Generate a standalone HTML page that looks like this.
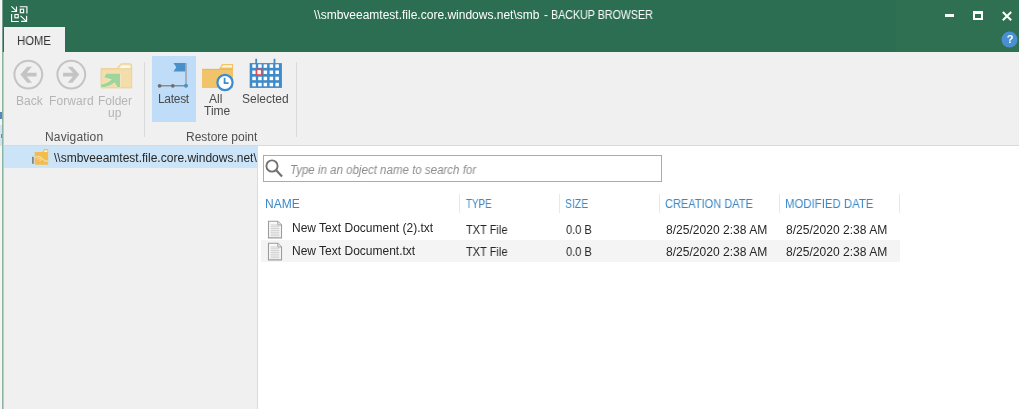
<!DOCTYPE html>
<html><head><meta charset="utf-8">
<style>
*{margin:0;padding:0;box-sizing:border-box}
html,body{width:1019px;height:409px;overflow:hidden;background:#fff}
body{position:relative;font-family:"Liberation Sans",sans-serif;font-size:12px;color:#262626}
.a{position:absolute}
.t{position:absolute;white-space:pre;line-height:14px;font-size:12px;will-change:transform}
</style></head><body>
<!-- left outside strip -->
<div class="a" style="left:0;top:0;width:2px;height:409px;background:#f5f5f5"></div>
<div class="a" style="left:2px;top:0;width:1px;height:409px;background:#8ab3a0"></div>
<div class="a" style="left:3px;top:0;width:1px;height:409px;background:#b5d0c3"></div>
<div class="a" style="left:0;top:112px;width:2px;height:7px;background:#5a84c0"></div>
<div class="a" style="left:0;top:125px;width:2px;height:21px;background:#d2e3f4"></div>
<div class="a" style="left:1px;top:134px;width:1px;height:4px;background:#9a8a4a"></div>
<!-- title bar -->
<div class="a" style="left:2px;top:0;width:1px;height:52px;background:#7aa08f"></div>
<div class="a" style="left:3px;top:0;width:1016px;height:52px;background:#2c6e51"></div>
<div class="a" style="left:896px;top:0;width:123px;height:52px;background:#2e7051"></div>
<svg class="a" style="left:11px;top:6px" width="17" height="17" viewBox="0 0 17 17" fill="none" stroke="#fff" stroke-width="1.15">
  <path d="M0.4 0.4L5.4 5.2M5.5 0.4V5.5H0.4"/>
  <path d="M8.7 0.7H15.9V7.4"/>
  <rect x="9.3" y="3.2" width="3.3" height="3.5"/>
  <path d="M0.6 8V15.5H7.8"/>
  <rect x="3.9" y="8.5" width="3.3" height="3.3"/>
  <path d="M9.5 9.8L15.3 15.2M15.6 9.8V15.4H10.1"/>
</svg>
<div class="t" style="left:314px;top:8px;color:#fff">\\smbveeamtest.file.core.windows.net\smb</div>
<div class="t" style="left:544px;top:8px;color:#fff">-</div>
<div class="t" style="left:551px;top:8px;color:#fff;transform:scaleX(0.89);transform-origin:0 0">BACKUP BROWSER</div>
<!-- window controls -->
<div class="a" style="left:945px;top:14px;width:9px;height:3px;background:#fff"></div>
<div class="a" style="left:973px;top:11px;width:10px;height:9px;border:2px solid #fff;border-top-width:3px"></div>
<svg class="a" style="left:1001px;top:10px" width="12" height="12" viewBox="0 0 12 12" stroke="#fff" stroke-width="2"><path d="M1.8 2L10.2 10.3M10.2 2L1.8 10.3"/></svg>
<svg class="a" style="left:1000px;top:30px" width="19" height="19" viewBox="0 0 19 19"><circle cx="9.5" cy="9.6" r="8" fill="#4a90d0"/></svg>
<div class="t" style="left:1002px;top:32px;width:16px;text-align:center;color:#fff;font-weight:bold;font-size:11px">?</div>
<!-- HOME tab -->
<div class="a" style="left:4px;top:27px;width:61px;height:25px;background:#f0f0f0"></div>
<div class="t" style="left:17px;top:34px;color:#333;transform:scaleX(0.94);transform-origin:0 0">HOME</div>
<!-- ribbon -->
<div class="a" style="left:4px;top:52px;width:1015px;height:93px;background:#f0f0f0"></div>
<div class="a" style="left:3px;top:145px;width:1016px;height:1px;background:#d9d9d9"></div>


<!-- Navigation group -->
<svg class="a" style="left:12px;top:58px" width="34" height="34" viewBox="0 0 34 34">
  <circle cx="16.3" cy="16.6" r="13.9" fill="none" stroke="#c4c4c4" stroke-width="2"/>
  <path d="M24.55 14.8H14.65L20.05 8.7H15.25L8.35 16.6L15.25 24.8H20.05L14.65 18.5H24.55Z" fill="#c4c4c4"/>
</svg>
<svg class="a" style="left:55px;top:58px" width="34" height="34" viewBox="0 0 34 34">
  <circle cx="16.3" cy="16.6" r="13.9" fill="none" stroke="#c4c4c4" stroke-width="2"/>
  <path d="M8.1 14.8H18L12.6 8.7H17.4L24.3 16.6L17.4 24.8H12.6L18 18.5H8.1Z" fill="#c4c4c4"/>
</svg>
<svg class="a" style="left:100px;top:62px" width="34" height="28" viewBox="0 0 34 28">
  <path d="M1 6.8H16.7L20.8 1.8H30.2Q31.7 1.8 31.7 3.3V25.9H1Z" fill="#f2ddab" stroke="#ebd29a" stroke-width="1"/>
  <path d="M19 6.2L21.6 3.2H30.4V6.2Z" fill="#f8f7f4"/>
  <path d="M1 6.8H31.5" stroke="#ebd29a" stroke-width="1"/>
  <path d="M6.4 11.5H20V25.2L17.8 25.6L14.6 20.4Q9 24.8 1 25.6V22.6Q7.5 21.6 11.6 17.6L4 15.3Z" fill="#9fd59c" stroke="#f7f0de" stroke-width="0.9" paint-order="stroke"/>
</svg>
<div class="t" style="left:16px;top:94px;color:#b4b4b4">Back</div>
<div class="t" style="left:49px;top:94px;color:#b4b4b4;letter-spacing:0.1px">Forward</div>
<div class="t" style="left:98px;top:94px;color:#b4b4b4">Folder</div>
<div class="t" style="left:108px;top:106px;color:#b4b4b4">up</div>
<div class="t" style="left:45px;top:130px;color:#505050;letter-spacing:0.15px">Navigation</div>
<div class="a" style="left:144px;top:62px;width:1px;height:75px;background:#dadada"></div>

<!-- Restore point group -->
<div class="a" style="left:152px;top:56px;width:44px;height:66px;background:#bfdcf8"></div>
<svg class="a" style="left:155px;top:60px" width="36" height="30" viewBox="0 0 36 30">
  <path d="M31 3V26" stroke="#8c8c8c" stroke-width="1.1"/>
  <path d="M18.5 3H30.2V11.5H18.5L21.3 7.2Z" fill="#4a90c8"/>
  <path d="M4.5 25.8H31" stroke="#7a7a7a" stroke-width="1.2"/>
  <circle cx="4.6" cy="25.8" r="1.9" fill="#6e6e6e"/>
  <circle cx="17.8" cy="25.8" r="1.9" fill="#6e6e6e"/>
  <circle cx="31" cy="25.8" r="2" fill="#4a90c8"/>
</svg>
<div class="t" style="left:158px;top:92px;color:#4a4a4a;letter-spacing:-0.3px">Latest</div>
<svg class="a" style="left:200px;top:62px" width="36" height="32" viewBox="0 0 36 32">
  <path d="M2 7H19L22 2H33V26H2Z" fill="#f1c36b"/>
  <path d="M21 5.5L23 3.2H32V5.5Z" fill="#fdf3df"/>
  <path d="M2 7.3H33" stroke="#e6b052" stroke-width="0.8"/>
  <circle cx="25" cy="20.5" r="7.6" fill="#fff" stroke="#3b8bd2" stroke-width="2.2"/>
  <path d="M24.6 15.8V21.2H28.6" fill="none" stroke="#3b8bd2" stroke-width="1.8"/>
</svg>
<div class="t" style="left:209px;top:92px;color:#4a4a4a">All</div>
<div class="t" style="left:204px;top:104px;color:#4a4a4a">Time</div>
<svg class="a" style="left:249px;top:58px" width="34" height="32" viewBox="0 0 34 32">
  <rect x="0.7" y="5.1" width="32.2" height="24.8" fill="#3f8ac8"/>
  <path d="M7.2 0.8V6M25.5 0.8V6" stroke="#3f8ac8" stroke-width="1.8"/>
  <g fill="#fff"><rect x="3.3" y="6.3" width="3.5" height="3.5"/><rect x="9.2" y="6.3" width="3.5" height="3.5"/><rect x="14.6" y="6.3" width="3.5" height="3.5"/><rect x="20.6" y="6.3" width="3.5" height="3.5"/><rect x="26.4" y="6.3" width="3.5" height="3.5"/><rect x="3.3" y="12.5" width="3.5" height="3.5"/><rect x="9.2" y="12.5" width="3.5" height="3.5"/><rect x="14.6" y="12.5" width="3.5" height="3.5"/><rect x="20.6" y="12.5" width="3.5" height="3.5"/><rect x="26.4" y="12.5" width="3.5" height="3.5"/><rect x="3.3" y="18.7" width="3.5" height="3.5"/><rect x="9.2" y="18.7" width="3.5" height="3.5"/><rect x="14.6" y="18.7" width="3.5" height="3.5"/><rect x="20.6" y="18.7" width="3.5" height="3.5"/><rect x="26.4" y="18.7" width="3.5" height="3.5"/><rect x="3.3" y="24.8" width="3.5" height="3.5"/><rect x="9.2" y="24.8" width="3.5" height="3.5"/><rect x="14.6" y="24.8" width="3.5" height="3.5"/><rect x="20.6" y="24.8" width="3.5" height="3.5"/><rect x="26.4" y="24.8" width="3.5" height="3.5"/></g>
  <rect x="7.5" y="11.4" width="5.2" height="5.6" fill="#fff" stroke="#e5484d" stroke-width="1.6"/>
</svg>
<div class="t" style="left:242px;top:92px;color:#4a4a4a">Selected</div>
<div class="t" style="left:186px;top:130px;color:#505050">Restore point</div>
<div class="a" style="left:296px;top:62px;width:1px;height:75px;background:#dadada"></div>

<!-- tree panel -->
<div class="a" style="left:4px;top:146px;width:253px;height:263px;background:#f0f0f0"></div>
<div class="a" style="left:257px;top:146px;width:1px;height:263px;background:#dcdcdc"></div>
<div class="a" style="left:4px;top:146px;width:253px;height:22px;background:#cce4f7"></div>
<div class="t" style="left:54px;top:151px;width:203px;overflow:hidden;color:#262626">\\smbveeamtest.file.core.windows.net\smb</div>


<svg class="a" style="left:30px;top:148px" width="20" height="18" viewBox="0 0 20 18">
  <path d="M4.7 3.9H12.5L14.1 1H17.2Q18.2 1 18.2 2V15.8Q18.2 16.8 17.2 16.8H6Q4.7 16.8 4.7 15.5Z" fill="#f3bd4e"/>
  <path d="M13.8 3.9L14.8 2.3H17.3V3.9Z" fill="#fff4d8"/>
  <path d="M5 9.8Q7 8.4 8.8 8.5Q11 8.8 12.5 11Q14.5 13.3 18.2 13.4" fill="none" stroke="#f8e0ae" stroke-width="1.1"/>
  <path d="M6.6 11.8Q8.6 9.4 10.8 11.2Q11.5 12.6 9.3 13.1" fill="none" stroke="#f8e0ae" stroke-width="1"/>
  <rect x="2" y="8.8" width="1.8" height="7" fill="#858585"/>
</svg>
<!-- content -->
<div class="a" style="left:263px;top:155px;width:399px;height:27px;border:1px solid #ababab;background:#fff"></div>
<svg class="a" style="left:264px;top:158px" width="22" height="22" viewBox="0 0 22 22">
  <circle cx="8" cy="8" r="5.6" fill="none" stroke="#727272" stroke-width="1.9"/>
  <path d="M12 12L18 18.5" stroke="#727272" stroke-width="2.2"/>
</svg>
<div class="t" style="left:290px;top:163px;color:#8c8c8c;font-style:italic;transform:scaleX(0.96);transform-origin:0 0">Type in an object name to search for</div>

<div class="t" style="left:265px;top:197px;color:#3a88c8">NAME</div>
<div class="t" style="left:466px;top:197px;color:#3a88c8;transform:scaleX(0.82);transform-origin:0 0">TYPE</div>
<div class="t" style="left:565px;top:197px;color:#3a88c8;transform:scaleX(0.87);transform-origin:0 0">SIZE</div>
<div class="t" style="left:665px;top:197px;color:#3a88c8;transform:scaleX(0.92);transform-origin:0 0">CREATION DATE</div>
<div class="t" style="left:785px;top:197px;color:#3a88c8;transform:scaleX(0.95);transform-origin:0 0">MODIFIED DATE</div>
<div class="a" style="left:459px;top:194px;width:1px;height:19px;background:#e8e8e8"></div>
<div class="a" style="left:559px;top:194px;width:1px;height:19px;background:#e8e8e8"></div>
<div class="a" style="left:659px;top:194px;width:1px;height:19px;background:#e8e8e8"></div>
<div class="a" style="left:779px;top:194px;width:1px;height:19px;background:#e8e8e8"></div>
<div class="a" style="left:899px;top:194px;width:1px;height:19px;background:#e8e8e8"></div>

<div class="a" style="left:261px;top:240px;width:639px;height:22px;background:#f4f4f4"></div>
<svg class="a" style="left:267px;top:220px" width="16" height="20" viewBox="0 0 16 20">
  <path d="M1.5 1.3H10.8L14.5 5V17.9H1.5Z" fill="#f8f8f8" stroke="#9c9c9c" stroke-width="1.1"/>
  <path d="M10.8 1.3V5H14.5" fill="#e8e8e8" stroke="#9c9c9c" stroke-width="0.9"/>
  <path d="M3.6 5.0H12.4M3.6 6.8H12.4M3.6 8.6H12.4M3.6 10.4H12.4M3.6 12.2H12.4M3.6 14.0H12.4M3.6 15.8H12.4" stroke="#c8c8c8" stroke-width="0.9"/>
</svg>
<svg class="a" style="left:267px;top:242px" width="16" height="20" viewBox="0 0 16 20">
  <path d="M1.5 1.3H10.8L14.5 5V17.9H1.5Z" fill="#f8f8f8" stroke="#9c9c9c" stroke-width="1.1"/>
  <path d="M10.8 1.3V5H14.5" fill="#e8e8e8" stroke="#9c9c9c" stroke-width="0.9"/>
  <path d="M3.6 5.0H12.4M3.6 6.8H12.4M3.6 8.6H12.4M3.6 10.4H12.4M3.6 12.2H12.4M3.6 14.0H12.4M3.6 15.8H12.4" stroke="#c8c8c8" stroke-width="0.9"/>
</svg>
<div class="t" style="left:292px;top:221px;color:#262626">New Text Document (2).txt</div>
<div class="t" style="left:292px;top:244px;color:#262626">New Text Document.txt</div>
<div class="t" style="left:466px;top:223px;color:#262626;transform:scaleX(0.92);transform-origin:0 0">TXT File</div>
<div class="t" style="left:466px;top:245px;color:#262626;transform:scaleX(0.92);transform-origin:0 0">TXT File</div>
<div class="t" style="left:566px;top:223px;color:#262626;transform:scaleX(0.92);transform-origin:0 0">0.0 B</div>
<div class="t" style="left:566px;top:245px;color:#262626;transform:scaleX(0.92);transform-origin:0 0">0.0 B</div>
<div class="t" style="left:666px;top:223px;color:#262626;transform:scaleX(1.005);transform-origin:0 0">8/25/2020 2:38 AM</div>
<div class="t" style="left:666px;top:245px;color:#262626;transform:scaleX(1.005);transform-origin:0 0">8/25/2020 2:38 AM</div>
<div class="t" style="left:786px;top:223px;color:#262626;transform:scaleX(1.005);transform-origin:0 0">8/25/2020 2:38 AM</div>
<div class="t" style="left:786px;top:245px;color:#262626;transform:scaleX(1.005);transform-origin:0 0">8/25/2020 2:38 AM</div>

</body></html>
